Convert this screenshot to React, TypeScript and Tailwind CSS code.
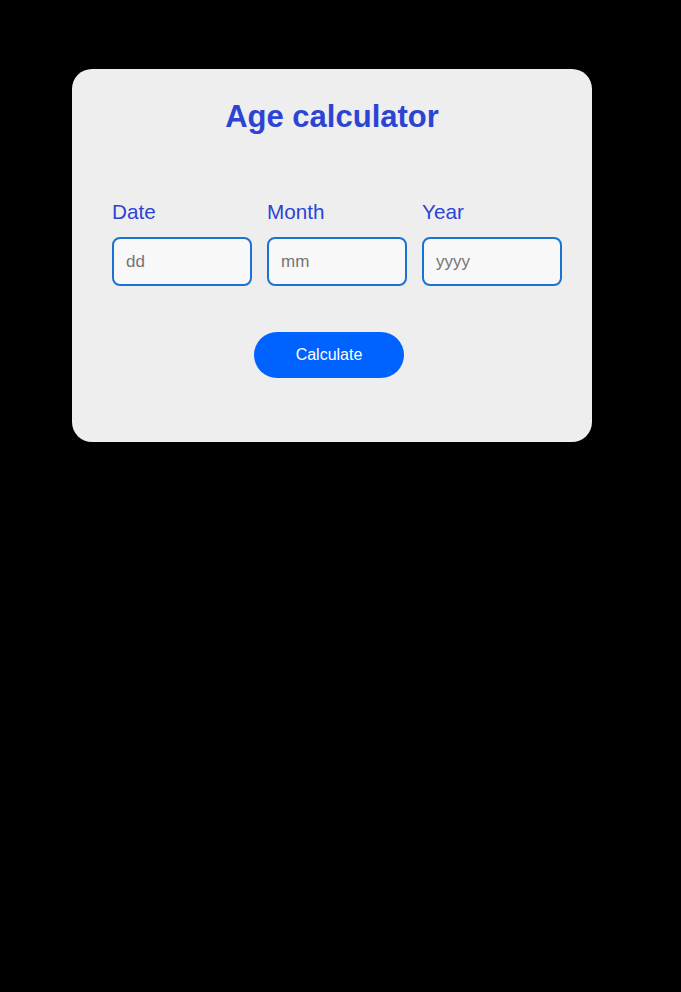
export default function App() {
  const fields = [
    { label: 'Date', placeholder: 'dd' },
    { label: 'Month', placeholder: 'mm' },
    { label: 'Year', placeholder: 'yyyy' },
  ]

  return (
    <div className="min-h-[992px] w-full bg-black pt-[69px] font-['Liberation_Sans',Arial,sans-serif]">
      <div className="ml-[72px] h-[373px] w-[520px] rounded-[20px] bg-[#eeeeee] pt-[29px]">
        <h1 className="text-center text-[31px] font-bold leading-[37px] text-[#2c44d4]">Age calculator</h1>

        {/* Inputs */}
        <div className="mt-[65px] flex gap-[15px] pl-[40px]">
          {fields.map(({ label, placeholder }) => (
            <div key={label} className="flex w-[140px] flex-col">
              <label className="text-[20.7px] leading-[24px] text-[#2c44d4]">{label}</label>
              <input
                type="text"
                placeholder={placeholder}
                className="mt-[13px] h-[49px] w-[140px] rounded-[8px] border-2 border-[#1a73d1] bg-[#f8f8f8] px-[12px] text-[17px] outline-none placeholder:text-[#757575]"
              />
            </div>
          ))}
        </div>

        <button className="ml-[182px] mt-[46px] h-[46px] w-[150px] rounded-full bg-[#0062ff] text-[16px] text-white">
          Calculate
        </button>
      </div>
    </div>
  )
}
